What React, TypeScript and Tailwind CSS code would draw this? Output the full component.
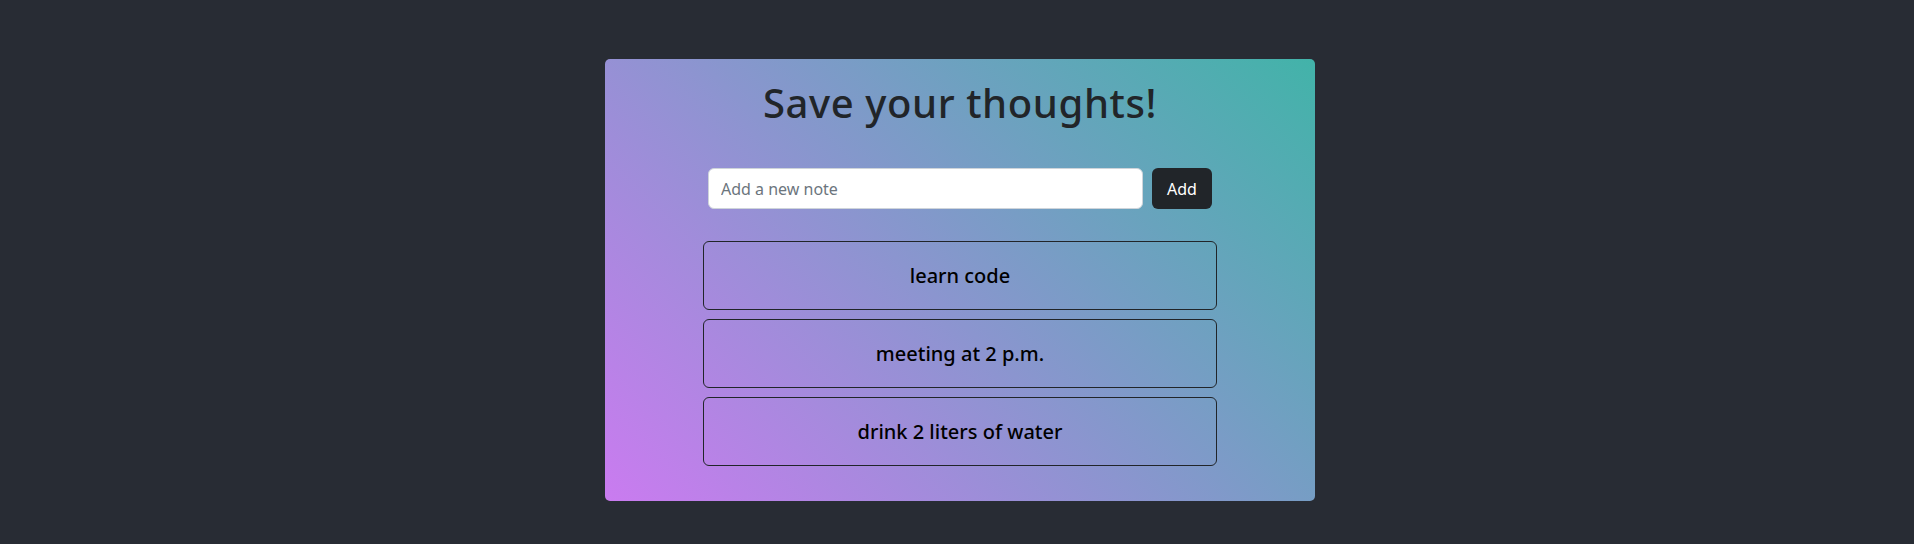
import React, { useState } from 'react';

const initialNotes = ['learn code', 'meeting at 2 p.m.', 'drink 2 liters of water'];

const App: React.FC = () => {
  const [notes, setNotes] = useState<string[]>(initialNotes);
  const [text, setText] = useState('');

  const addNote = (e: React.FormEvent) => {
    e.preventDefault();
    if (!text.trim()) return;
    setNotes([...notes, text.trim()]);
    setText('');
  };

  return (
    <div className="min-h-screen bg-[#282c34] flex justify-center pt-[59px] pl-[6px] font-['Noto_Sans',sans-serif]">
      <div className="w-[710px] h-[442px] rounded-[5px] bg-[linear-gradient(45deg,#ca7bf0,#42b3a9)] flex flex-col items-center">
        <h1 className="mt-[20px] text-[40px] leading-[48px] font-medium tracking-[0.6px] text-[#212529]">
          Save your thoughts!
        </h1>

        <form onSubmit={addNote} className="mt-[41px] flex gap-[9px]">
          <input
            value={text}
            onChange={(e) => setText(e.target.value)}
            placeholder="Add a new note"
            className="w-[435px] h-[41px] px-3 rounded-[6px] bg-white border border-[#ced4da] text-base text-[#212529] placeholder:text-[#6c757d] outline-none"
          />
          <button
            type="submit"
            className="w-[60px] h-[41px] rounded-[6px] bg-[#212529] text-white text-base"
          >
            Add
          </button>
        </form>

        <ul className="mt-[32px] flex flex-col gap-[9px]">
          {notes.map((note) => (
            <li
              key={note}
              className="w-[514px] h-[69px] flex items-center justify-center rounded-[6px] border border-[#212529] text-[20px] font-medium text-black"
            >
              {note}
            </li>
          ))}
        </ul>
      </div>
    </div>
  );
};

export default App;
